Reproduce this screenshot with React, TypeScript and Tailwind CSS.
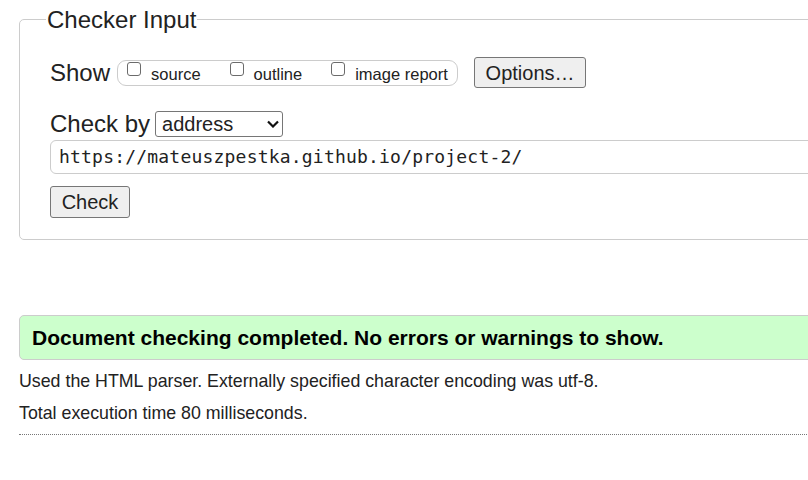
import React from "react"

const sans = "font-['Liberation_Sans',Arial,sans-serif]"

function Box({ label, className = "" }: { label: string; className?: string }) {
  return (
    <label className={`flex items-start ${className}`}>
      <span className="mt-[1px] block h-[14px] w-[14px] shrink-0 rounded-[3px] border-[1.5px] border-[#6b6b6b] bg-white" />
      <span className="ml-[10px] mt-[5px] text-[16.5px] leading-[16.5px] text-[#222]">{label}</span>
    </label>
  )
}

export default function App() {
  return (
    <div className={`h-[480px] w-[808px] overflow-hidden bg-white text-[#222] ${sans}`}>
      <div className="w-[1100px] pl-[19px]">
        {/* checker input */}
        <fieldset className="mt-[6px] rounded-[5px] border border-[#cccccc] pb-[21px] pl-[30px] pr-[10px]">
          <legend className="ml-[-4px] px-[1px] text-[24px] leading-[27px] text-[#222]">Checker Input</legend>

          <div className="mt-[24px] flex items-center">
            <span className="text-[24px] leading-none">Show</span>
            <div className="ml-[7px] flex h-[26px] w-[341px] items-start rounded-[9px] border border-[#cccccc] pl-[9px]">
              <Box label="source" />
              <Box label="outline" className="ml-[29px]" />
              <Box label="image report" className="ml-[29px]" />
            </div>
            <button className="ml-[16px] h-[31px] w-[112px] rounded-[3px] border border-[#767676] bg-[#efefef] text-[20px] leading-none">
              Options…
            </button>
          </div>

          <div className="mt-[23px] flex items-center">
            <span className="text-[24px] leading-none">Check by</span>
            <div className="ml-[5px] flex h-[26px] w-[128px] items-center justify-between rounded-[3px] border border-[#767676] pl-[6px] pr-[2px]">
              <span className="text-[20px] leading-none">address</span>
              <svg width="12" height="8" viewBox="0 0 12 8" className="mr-[1px]">
                <path d="M1 1.5 L6 6.5 L11 1.5" fill="none" stroke="#111" strokeWidth="2.2" />
              </svg>
            </div>
          </div>

          <div className="mt-[3px] flex h-[34px] items-center rounded-[6px] border border-[#cccccc] pl-[8px]">
            <span className="font-['DejaVu_Sans_Mono',monospace] text-[18px] leading-none tracking-[0.2px]">
              https://mateuszpestka.github.io/project-2/
            </span>
          </div>

          <button className="mt-[12px] h-[32px] w-[80px] rounded-[3px] border border-[#767676] bg-[#efefef] text-[20px] leading-none">
            Check
          </button>
        </fieldset>

        {/* result */}
        <div className="mt-[75px] flex h-[45px] items-center rounded-[5px] border border-[#cccccc] bg-[#ccffcc] pl-[12px]">
          <span className="text-[21px] font-bold leading-none text-black">
            Document checking completed. No errors or warnings to show.
          </span>
        </div>
        <p className="mt-[11px] text-[17.8px] leading-[20px]">
          Used the HTML parser. Externally specified character encoding was utf-8.
        </p>
        <p className="mt-[12px] text-[17.8px] leading-[20px]">Total execution time 80 milliseconds.</p>
        <div className="mt-[11px] w-[900px] border-t border-dotted border-[#777]" />
      </div>
    </div>
  )
}
